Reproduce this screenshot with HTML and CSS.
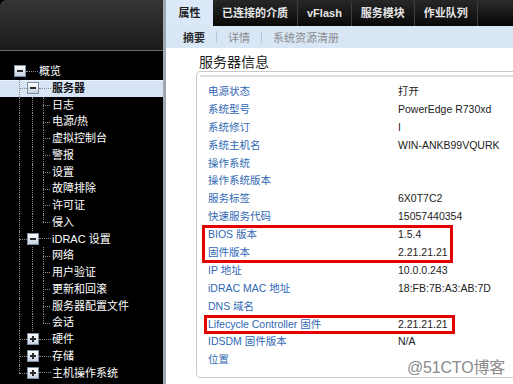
FILE: index.html
```html
<!DOCTYPE html>
<html lang="zh-CN">
<head>
    <meta charset="UTF-8">
    <meta name="viewport" content="width=device-width, initial-scale=1.0">
    <title>iDRAC 服务器信息</title>
    <link rel="stylesheet" href="styles.css">
</head>
<body>

<div class="page">

    <!-- left navigation tree -->
    <div class="sidebar">
        <div class="side-head"></div>
        <div class="tree">
            <div class="node"><span class="box minus root"></span><span class="h"></span><span class="name">概览</span></div>
            <div class="node active"><span class="t"></span><span class="box minus"></span><span class="h"></span><span class="name">服务器</span></div>
            <div class="node"><span class="v"></span><span class="v"></span><span class="t2"></span><span class="name">日志</span></div>
            <div class="node"><span class="v"></span><span class="v"></span><span class="t2"></span><span class="name">电源/热</span></div>
            <div class="node"><span class="v"></span><span class="v"></span><span class="t2"></span><span class="name">虚拟控制台</span></div>
            <div class="node"><span class="v"></span><span class="v"></span><span class="t2"></span><span class="name">警报</span></div>
            <div class="node"><span class="v"></span><span class="v"></span><span class="t2"></span><span class="name">设置</span></div>
            <div class="node"><span class="v"></span><span class="v"></span><span class="t2"></span><span class="name">故障排除</span></div>
            <div class="node"><span class="v"></span><span class="v"></span><span class="t2"></span><span class="name">许可证</span></div>
            <div class="node"><span class="v"></span><span class="v"></span><span class="t2 last"></span><span class="name">侵入</span></div>
            <div class="node"><span class="t"></span><span class="box minus"></span><span class="h"></span><span class="name">iDRAC 设置</span></div>
            <div class="node"><span class="v"></span><span class="v"></span><span class="t2"></span><span class="name">网络</span></div>
            <div class="node"><span class="v"></span><span class="v"></span><span class="t2"></span><span class="name">用户验证</span></div>
            <div class="node"><span class="v"></span><span class="v"></span><span class="t2"></span><span class="name">更新和回滚</span></div>
            <div class="node"><span class="v"></span><span class="v"></span><span class="t2"></span><span class="name">服务器配置文件</span></div>
            <div class="node"><span class="v"></span><span class="v"></span><span class="t2 last"></span><span class="name">会话</span></div>
            <div class="node"><span class="t"></span><span class="box plus"></span><span class="h"></span><span class="name">硬件</span></div>
            <div class="node"><span class="t"></span><span class="box plus"></span><span class="h"></span><span class="name">存储</span></div>
            <div class="node"><span class="t last"></span><span class="box plus"></span><span class="h"></span><span class="name">主机操作系统</span></div>
        </div>
    </div>

    <!-- main content -->
    <div class="main">
        <div class="tabs">
            <div class="tab on">属性</div>
            <div class="tab">已连接的介质</div>
            <div class="tab">vFlash</div>
            <div class="tab">服务模块</div>
            <div class="tab">作业队列</div>
        </div>
        <div class="subtabs">
            <span class="sub on">摘要</span>
            <span class="sep"></span>
            <span class="sub">详情</span>
            <span class="sep"></span>
            <span class="sub">系统资源清册</span>
        </div>

        <h2 class="title">服务器信息</h2>

        <div class="panel">
            <div class="panel-line"></div>
            <div class="rows">
                <div class="row"><span class="label">电源状态</span><span class="value">打开</span></div>
                <div class="row"><span class="label">系统型号</span><span class="value">PowerEdge R730xd</span></div>
                <div class="row"><span class="label">系统修订</span><span class="value">I</span></div>
                <div class="row"><span class="label">系统主机名</span><span class="value">WIN-ANKB99VQURK</span></div>
                <div class="row"><span class="label">操作系统</span><span class="value"></span></div>
                <div class="row"><span class="label">操作系统版本</span><span class="value"></span></div>
                <div class="row"><span class="label">服务标签</span><span class="value">6X0T7C2</span></div>
                <div class="row"><span class="label">快速服务代码</span><span class="value">15057440354</span></div>
                <div class="mark">
                    <div class="row"><span class="label">BIOS 版本</span><span class="value">1.5.4</span></div>
                    <div class="row"><span class="label">固件版本</span><span class="value">2.21.21.21</span></div>
                </div>
                <div class="row"><span class="label">IP 地址</span><span class="value">10.0.0.243</span></div>
                <div class="row"><span class="label">iDRAC MAC 地址</span><span class="value">18:FB:7B:A3:AB:7D</span></div>
                <div class="row"><span class="label">DNS 域名</span><span class="value"></span></div>
                <div class="mark mark-lc">
                    <div class="row"><span class="label">Lifecycle Controller 固件</span><span class="value">2.21.21.21</span></div>
                </div>
                <div class="row"><span class="label">IDSDM 固件版本</span><span class="value">N/A</span></div>
                <div class="row"><span class="label">位置</span><span class="value"></span></div>
            </div>
        </div>

        <div class="watermark">@51CTO博客</div>
    </div>

</div>

</body>
</html>
```

FILE: styles.css
```css
*{
    box-sizing: border-box;
}

body{
    margin: 0;
    background: #fff;
    font-family: "Liberation Sans", "Noto Sans CJK SC", sans-serif;
}

.page{
    display: flex;
    height: 384px;
    overflow: hidden;
}

/* ---------- sidebar ---------- */

.sidebar{
    width: 164px;
    flex: none;
    background: #000;
    border-right: 1px solid #a8a8a8;
}

.side-head{
    height: 51px;
    background: linear-gradient(#353535, #1b1b1b);
    border-top-left-radius: 6px;
    border-bottom: 1px solid #6c6c6c;
}

.tree{
    padding-top: 12px;
}

.node{
    display: flex;
    height: 16.75px;
    padding-left: 13px;
    color: #fff;
    font-size: 11px;
}

.node.active{
    background: #d6e4f5;
    box-shadow: inset 0 1px 0 #eef4fb;
}

.node.active .name{
    color: #111;
    font-weight: bold;
}

.name{
    line-height: 16.75px;
    padding-left: 1px;
    white-space: nowrap;
}

.v{
    flex: none;
    width: 7px;
    margin-left: 6px;
    border-left: 1px dotted #8a8a8a;
}

.t,
.t2{
    flex: none;
    position: relative;
    width: 14px;
}

.t2{
    width: 12px;
}

.t::before,
.t2::before{
    content: "";
    position: absolute;
    left: 6px;
    top: 0;
    bottom: 0;
    border-left: 1px dotted #8a8a8a;
}

.t2::before{
    left: 4px;
}

.t.last::before,
.t2.last::before{
    bottom: 50%;
}

.t::after,
.t2::after{
    content: "";
    position: absolute;
    left: 6px;
    right: 0;
    top: 50%;
    border-top: 1px dotted #8a8a8a;
}

.t2::after{
    left: 4px;
    right: 1px;
}

.h{
    flex: none;
    width: 12px;
    height: 0;
    align-self: center;
    border-top: 1px dotted #8a8a8a;
}

.box{
    flex: none;
    position: relative;
    width: 12px;
    height: 12px;
    align-self: center;
    border: 1px solid #7f8ea1;
    background: linear-gradient(#ffffff, #c4d2e2);
}

.box.root{
    margin-left: 1px;
}

.box::before{
    content: "";
    position: absolute;
    left: 2px;
    right: 2px;
    top: 4px;
    height: 2px;
    background: #2b2b2b;
}

.box.plus::after{
    content: "";
    position: absolute;
    left: 4px;
    top: 2px;
    bottom: 2px;
    width: 2px;
    background: #2b2b2b;
}

/* ---------- main ---------- */

.main{
    flex: 1;
    position: relative;
    overflow: hidden;
    border-left: 2px solid #9ba8b6;
}

.tabs{
    display: flex;
    height: 26px;
    background: linear-gradient(#2c2c2c, #040404);
}

.tab{
    padding: 0 9px;
    line-height: 26px;
    font-size: 11px;
    font-weight: bold;
    color: #e6e6e6;
    white-space: nowrap;
    border-right: 1px solid #3e3e3e;
    border-radius: 4px 4px 0 0;
    background: linear-gradient(#272727, #090909);
}

.tab.on{
    width: 47px;
    padding: 0;
    text-align: center;
    color: #1b1b1b;
    background: #dbe8f7;
    border-right: none;
    border-radius: 0;
}

.subtabs{
    display: flex;
    align-items: center;
    gap: 11px;
    height: 22px;
    padding-left: 17px;
    background: #d8e6f6;
    font-size: 11px;
    color: #8c8c8c;
}

.sub.on{
    color: #2a2a2a;
    font-weight: bold;
}

.sep{
    width: 1px;
    height: 12px;
    background: #b7c6d8;
}

.title{
    margin: 6px 0 0 33px;
    font-size: 14px;
    line-height: 17px;
    font-weight: normal;
    color: #1e1e1e;
}

.panel{
    margin: 0 -12px 0 30px;
    padding: 3px 0 8px 3px;
    border: 1px solid #c9c9c9;
    border-radius: 4px;
}

.panel-line{
    height: 2px;
    background: #dedede;
}

.rows{
    margin-top: 6px;
}

.row{
    display: flex;
    height: 17.9px;
    line-height: 17.9px;
    padding-left: 8px;
    font-size: 10.5px;
    white-space: nowrap;
}

.label{
    flex: none;
    width: 190px;
    color: #2f67b3;
}

.value{
    color: #222;
}

.mark{
    width: 249px;
    margin-left: 3px;
    outline: 3px solid #e50000;
    outline-offset: -2px;
}

.mark .row{
    padding-left: 5px;
}

.mark-lc{
    margin-left: 5px;
}

.mark-lc .row{
    padding-left: 3px;
}

.watermark{
    position: absolute;
    right: 8px;
    bottom: 6px;
    font-size: 16px;
    line-height: 20px;
    color: #8a8a8a;
    letter-spacing: -0.2px;
}
```
